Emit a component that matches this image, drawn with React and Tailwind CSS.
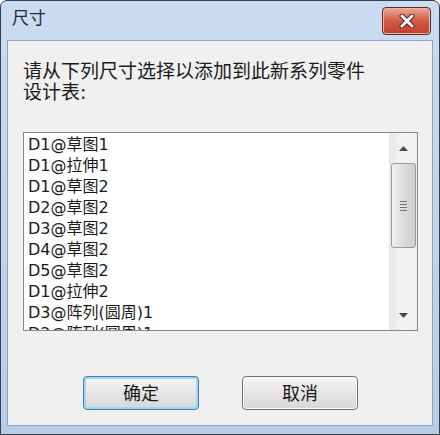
import React from "react";

const ITEMS = [
  "D1@草图1",
  "D1@拉伸1",
  "D1@草图2",
  "D2@草图2",
  "D3@草图2",
  "D4@草图2",
  "D5@草图2",
  "D1@拉伸2",
  "D3@阵列(圆周)1",
  "D2@阵列(圆周)1",
];

const CloseGlyph = () => (
  <svg width="18" height="14" viewBox="0 0 18 14">
    <path d="M4 2 L14 12 M14 2 L4 12" stroke="#5a1c14" strokeWidth="5" strokeLinecap="round" />
    <path d="M4 2 L14 12 M14 2 L4 12" stroke="#ffffff" strokeWidth="3" strokeLinecap="round" />
  </svg>
);

const Arrow = ({ up }) => (
  <svg width="9" height="5" viewBox="0 0 9 5">
    <path d={up ? "M0 5 L4.5 0 L9 5 Z" : "M0 0 L4.5 5 L9 0 Z"} fill="#4a4a4a" />
  </svg>
);

const ScrollBar = () => (
  <div className="w-[28px] flex flex-col items-center bg-gradient-to-r from-[#e6e6e6] via-[#f4f4f4] to-[#f0f0f0]">
    <div className="h-[30px] flex items-center justify-center">
      <Arrow up />
    </div>
    <div className="w-[25px] h-[85px] rounded-[3px] border border-[#9a9a9a] bg-gradient-to-r from-[#f1f1f1] via-[#dcdcdc] to-[#cfcfcf] flex flex-col items-center justify-center gap-[2px]">
      <div className="w-[7px] h-px bg-[#6e6e6e]" />
      <div className="w-[7px] h-px bg-[#6e6e6e]" />
      <div className="w-[7px] h-px bg-[#6e6e6e]" />
      <div className="w-[7px] h-px bg-[#6e6e6e]" />
    </div>
    <div className="flex-1" />
    <div className="h-[30px] flex items-center justify-center">
      <Arrow />
    </div>
  </div>
);

const Button = ({ label, focused }) => (
  <button
    className={`w-[116px] h-[34px] rounded-[4px] border text-[18px] text-[#1a1a1a] bg-gradient-to-b from-[#f4f4f4] via-[#e6e6e6] to-[#d6d6d6] ${
      focused
        ? "border-[#3c7fb1] shadow-[inset_0_0_0_2px_#9fd6f2]"
        : "border-[#707070] shadow-[inset_0_0_0_1px_#fbfbfb]"
    }`}
  >
    {label}
  </button>
);

export default function App() {
  return (
    <div className="w-[440px] h-[435px] border border-[#34404c] rounded-t-[7px] bg-gradient-to-b from-[#c9dcf0] to-[#b6cee8] flex flex-col px-[6px] pb-[8px] font-['DejaVu_Sans','Noto_Sans_CJK_SC',sans-serif] text-[#1a1a1a]">
      {/* Title bar */}
      <div className="h-[39px] flex items-start justify-between pl-[5px] pr-[2px] pt-[6px]">
        <span className="text-[17px] leading-[34px] -mt-[6px] text-[#1e2a36]">尺寸</span>
        <div className="w-[49px] h-[28px] rounded-[4px] border border-[#5b2a22] bg-gradient-to-b from-[#e9a99b] via-[#d25a45] to-[#c23d28] flex items-center justify-center shadow-[inset_0_0_0_1px_#f0b4a6]">
          <CloseGlyph />
        </div>
      </div>

      {/* Body */}
      <div className="flex-1 bg-[#f0f0f0] border border-[#8fa5bf] flex flex-col pl-[15px] pr-[14px] pt-[20px]">
        <p className="text-[19px] leading-[21px]">
          请从下列尺寸选择以添加到此新系列零件
          <br />
          设计表:
        </p>

        <div className="mt-[29px] h-[199px] border border-[#828790] bg-white flex overflow-hidden">
          <div className="flex-1 pl-[4px] pt-[1px] text-[16px] leading-[21px] overflow-hidden">
            {ITEMS.map((item, i) => (
              <div key={i} className="whitespace-nowrap">
                {item}
              </div>
            ))}
          </div>
          <ScrollBar />
        </div>

        <div className="mt-[45px] flex justify-center gap-[43px]">
          <Button label="确定" focused />
          <Button label="取消" />
        </div>
      </div>
    </div>
  );
}
